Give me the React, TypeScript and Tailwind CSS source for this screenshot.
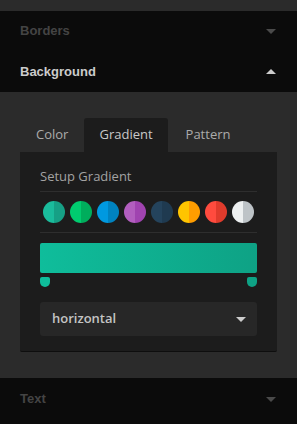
import React from "react";

const swatches = [
  ["#1abc9c", "#16a085"],
  ["#00cc6f", "#00ad5c"],
  ["#0099e0", "#0083c0"],
  ["#b25ebf", "#a043b0"],
  ["#24435c", "#1f3a50"],
  ["#ffc400", "#ff9d00"],
  ["#ff4b3e", "#e03b2c"],
  ["#edf0f1", "#bdc3c7"],
];

function Tri({ up, color, className = "" }: { up?: boolean; color: string; className?: string }) {
  return (
    <div
      className={`w-0 h-0 border-l-[5px] border-r-[5px] border-l-transparent border-r-transparent ${up ? "border-b-[5px]" : "border-t-[5px]"} ${className}`}
      style={up ? { borderBottomColor: color } : { borderTopColor: color }}
    />
  );
}

export default function App() {
  const sans = { fontFamily: '"Liberation Sans", Arial, sans-serif' };
  const open = { fontFamily: '"Open Sans", "Noto Sans", sans-serif' };
  return (
    <div className="w-[297px] h-[424px] bg-[#2b2b2b] overflow-hidden flex flex-col">
      <div className="h-[11px] bg-[#2b2b2b]" />
      <div className="bg-[#0b0b0b]">
        <div className="h-[40px] flex items-center justify-between pl-[20px] pr-[21px]">
          <span className="text-[13px] font-bold text-[#444444]" style={sans}>Borders</span>
          <Tri color="#4a4a4a" />
        </div>
        <div className="h-[41px] flex items-center justify-between pl-[20px] pr-[21px]">
          <span className="text-[13px] font-bold text-[#cccccc]" style={sans}>Background</span>
          <Tri up color="#cccccc" />
        </div>
      </div>
      <div className="h-[286px] bg-[#2b2b2b] px-[20px] pt-[26px]" style={open}>
        <div className="flex h-[34px] text-[13px]">
          <div className="px-[16px] flex items-center text-[#ababab]">Color</div>
          <div className="px-[15px] flex items-center bg-[#1c1c1c] rounded-t-[3px] text-[#c9c9c9]">Gradient</div>
          <div className="px-[18px] flex items-center text-[#ababab]">Pattern</div>
        </div>
        <div className="bg-[#1c1c1c] border-b border-[#0e0e0e] px-[20px] pt-[14px] pb-[15px] rounded-b-[2px]">
          <div className="h-[20px] leading-[20px] text-[13px] text-[#a3a3a3]">Setup Gradient</div>
          <div className="mt-[5px] h-px bg-[#2e2e2e]" />
          <div className="mt-[9px] pl-[3px] flex gap-[5px]">
            {swatches.map(([a, b], i) => (
              <div
                key={i}
                className="w-[22px] h-[22px] rounded-full"
                style={{ background: `linear-gradient(to right, ${a} 50%, ${b} 50%)` }}
              />
            ))}
          </div>
          <div className="mt-[9px] h-px bg-[#2e2e2e]" />
          <div className="mt-[10px] h-[30px] rounded-[2px] bg-gradient-to-r from-[#0fbd9b] to-[#0ea285]" />
          <div className="mt-[4px] h-[10px] flex justify-between">
            <div className="w-[10px] h-[10px] bg-[#0fbd9b] rounded-t-[2px] rounded-b-[5px]" />
            <div className="w-[10px] h-[10px] bg-[#0ea285] rounded-t-[2px] rounded-b-[5px]" />
          </div>
          <div className="mt-[15px] h-[34px] bg-[#272727] rounded-[3px] flex items-center justify-between pl-[12px] pr-[11px]">
            <span className="text-[13px] font-semibold text-[#c4c4c4]">horizontal</span>
            <Tri color="#cccccc" />
          </div>
        </div>
      </div>
      <div className="flex-1 bg-[#0b0b0b] flex items-start justify-between pl-[20px] pr-[21px] pt-[11px]">
        <span className="text-[13px] font-bold text-[#444444]" style={sans}>Text</span>
        <Tri color="#4a4a4a" className="mt-[8px]" />
      </div>
    </div>
  );
}
